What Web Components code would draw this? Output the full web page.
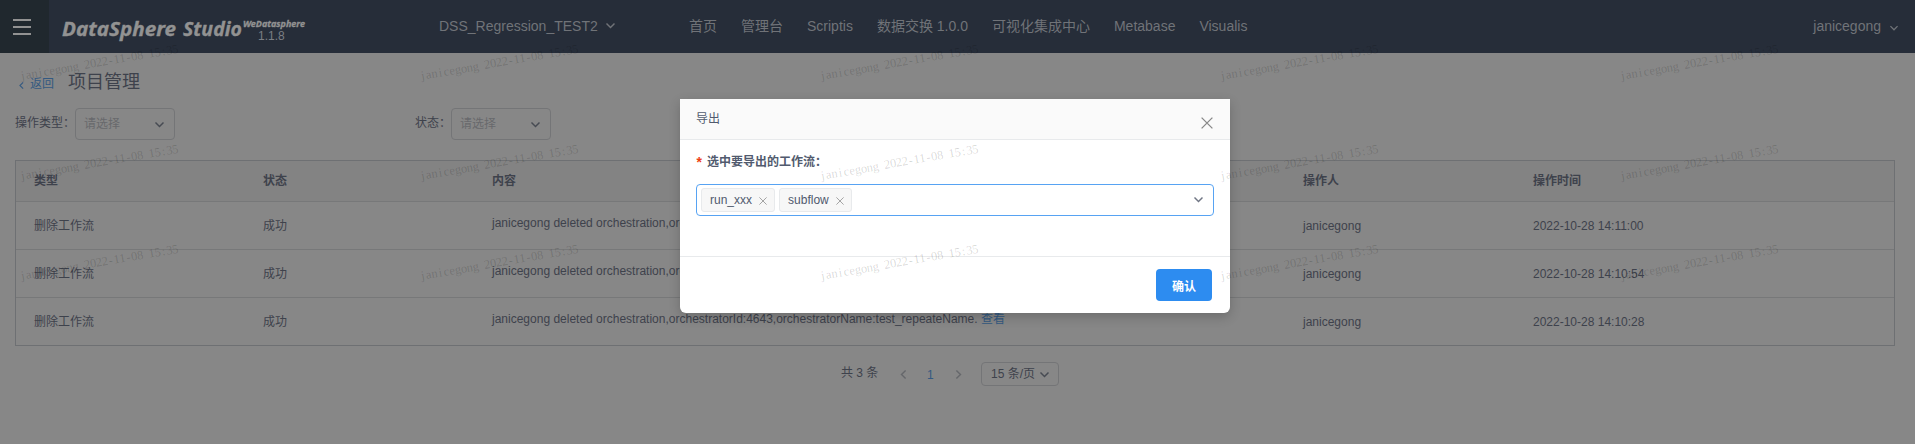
<!DOCTYPE html>
<html lang="zh">
<head>
<meta charset="utf-8">
<title>DataSphere Studio</title>
<style>
body{margin:0;background:#878787;font:12px/1.5 "Liberation Sans","Noto Sans CJK SC",sans-serif;color:#3e424c;overflow:hidden}
</style>
</head>
<body>
<dss-page></dss-page>
<script>
const define = (name, html, setup) => customElements.define(name, class extends HTMLElement {
  connectedCallback() {
    if (this.shadowRoot) return;
    const root = this.attachShadow({ mode: 'open' });
    root.innerHTML = html;
    if (setup) setup(this, root);
  }
});

define('ui-chevron', `<style>:host{display:inline-flex;width:9px;height:9px}svg{width:100%;height:100%;overflow:visible}
:host([dir=left]) svg{transform:rotate(90deg)}:host([dir=right]) svg{transform:rotate(-90deg)}</style>
<svg viewBox="0 0 9 9"><path d="M.5 2.4 4.5 6.5 8.5 2.4" fill="none" stroke="currentColor" stroke-width="1.4"/></svg>`);

define('ui-cross', `<style>:host{display:inline-flex;width:8px;height:8px}svg{width:100%;height:100%;overflow:visible}</style>
<svg viewBox="0 0 10 10"><path d="M.5.5 9.5 9.5M9.5.5.5 9.5" fill="none" stroke="currentColor" stroke-width="1.1"/></svg>`);

define('ui-select', `<style>:host{display:flex;box-sizing:border-box;width:100px;height:32px;align-items:center;justify-content:space-between;padding:0 10px 0 8px;border:1px solid #747577;border-radius:4px;color:#68696c}
ui-chevron{color:#474b53}</style><slot></slot><ui-chevron></ui-chevron>`);

define('dss-logo', `<style>:host{display:grid;grid-template-columns:181px 64px;height:53px;color:#8d8e90}
svg{display:block;overflow:visible}text{fill:#929292;font-family:"Noto Sans","Open Sans",sans-serif;font-weight:700;font-style:italic;stroke:#929292;stroke-width:.35px}
.side{display:flex;flex-direction:column;padding-top:18px}.v{font-size:12px;line-height:14px;padding:0 0 0 15px;margin-top:-1px;color:#7b7e84}</style>
<svg width="181" height="53"><text x="0" y="35.5" font-size="20" textLength="114" lengthAdjust="spacingAndGlyphs">DataSphere</text><text x="121" y="35.5" font-size="20" textLength="59" lengthAdjust="spacingAndGlyphs">Studio</text></svg>
<div class="side"><svg width="64" height="12"><text x="0" y="8.5" font-size="9.5" textLength="62" lengthAdjust="spacingAndGlyphs">WeDatasphere</text></svg><span class="v">1.1.8</span></div>`);

define('dss-header', `<style>:host{display:flex;height:53px;background:#262d39;color:#707378;font-size:14px;line-height:53px}
.menu{width:49px;display:flex;align-items:center;justify-content:center;padding-right:5px;box-sizing:border-box;background:#20282e}
dss-logo{margin-left:13px}
.project{display:flex;width:250px;margin-left:132px;align-items:center;gap:8px}
.project ui-chevron{width:9px;height:9px;margin-top:-2px}
nav{display:flex;gap:24px;flex:1}
.user{display:flex;align-items:center;gap:9px;padding-right:17px}.user ui-chevron{width:8px;height:8px;color:#707378;margin-top:3px}</style>
<div class="menu"><svg width="18" height="16" stroke="#929292" stroke-width="1.8"><path d="M0 1H18M0 8H18M0 15H18"/></svg></div>
<dss-logo></dss-logo>
<div class="project"><span>DSS_Regression_TEST2</span><ui-chevron></ui-chevron></div>
<nav><span>首页</span><span>管理台</span><span>Scriptis</span><span>数据交换 1.0.0</span><span>可视化集成中心</span><span>Metabase</span><span>Visualis</span></nav>
<div class="user"><span>janicegong</span><ui-chevron></ui-chevron></div>`);

define('dss-title', `<style>:host{display:flex;align-items:center;height:36px;margin-top:11px}
a{display:flex;align-items:center;gap:6px;color:#335981;margin:4px 14px 0 3px}ui-chevron{width:7px;height:7px;margin:2px -1px 0 0}
h1{margin:0;font-weight:400;font-size:18px;line-height:27px}</style>
<a><ui-chevron dir="left"></ui-chevron><span>返回</span></a><h1><slot></slot></h1>`);

define('dss-filters', `<style>:host{display:flex;height:32px;align-items:center;margin-top:8px}.f{display:flex;align-items:center;width:400px}.f>span{margin-top:-3px}</style>
<div class="f"><span>操作类型：</span><ui-select>请选择</ui-select></div><div class="f"><span>状态：</span><ui-select>请选择</ui-select></div>`);

define('dss-row', `<style>:host{display:grid;grid-template-columns:229px 229px 811px 230px 1fr;height:47px;align-items:center;border-bottom:1px solid #777879}
:host([head]){height:40px;background:#838383;font-weight:700}
:host(:last-child){border-bottom:0}
span{padding-left:18px;white-space:nowrap}:host(:not([head])) .c{margin-top:-6px}a{color:#335981}</style>
<span class="a"></span><span class="b"></span><span class="c"></span><span class="d"></span><span class="e"></span>`, (el, root) => {
  el.getAttribute('cells').split('|').forEach((t, i) => root.querySelectorAll('span')[i].textContent = t);
  if (el.hasAttribute('link')) {
    const a = document.createElement('a');
    a.textContent = el.getAttribute('link');
    root.querySelector('.c').append(' ', a);
  }
});

const content = 'janicegong deleted orchestration,orchestratorId:4643,orchestratorName:test_repeateName.';
define('dss-table', `<style>:host{display:block;border:1px solid #6e7073;margin-top:20px}</style>
<dss-row head cells="类型|状态|内容|操作人|操作时间"></dss-row>
<dss-row link="查看" cells="删除工作流|成功|${content}|janicegong|2022-10-28 14:11:00"></dss-row>
<dss-row link="查看" cells="删除工作流|成功|${content}|janicegong|2022-10-28 14:10:54"></dss-row>
<dss-row link="查看" cells="删除工作流|成功|${content}|janicegong|2022-10-28 14:10:28"></dss-row>`);

define('dss-pager', `<style>:host{display:flex;align-items:center;height:24px;margin:16px 0 0 826px}
ui-chevron{color:#65676b}.t{width:58px;margin-top:-2px}.n{color:#335981;width:7px;margin:2px 20px 0 19px}
ui-select{width:78px;height:24px;padding:0 9px;color:#3e424c;margin-left:18px}</style>
<span class="t">共 3 条</span><ui-chevron dir="left"></ui-chevron><span class="n">1</span><ui-chevron dir="right"></ui-chevron><ui-select>15 条/页</ui-select>`);

define('ui-tag', `<style>:host{display:flex;box-sizing:border-box;height:24px;align-items:center;padding:0 7px 0 8px;gap:7px;border:1px solid #e8eaec;border-radius:3px;background:#f7f7f7;color:#515a6e}ui-cross{color:#999;margin-top:1px}</style><slot></slot><ui-cross></ui-cross>`);

define('dss-modal', `<style>:host{position:absolute;left:680px;top:99px;width:550px;height:214px;background:#fff;border-radius:0 0 6px 6px;box-shadow:0 4px 12px rgba(0,0,0,.2);color:#515a6e;display:flex;flex-direction:column}
header{box-sizing:border-box;height:41px;background:#fafafa;border-bottom:1px solid #e8eaec;display:flex;justify-content:space-between;align-items:center;padding:0 17px 0 16px}
header ui-cross{width:12px;height:12px;color:#888;margin-top:8px}
main{box-sizing:border-box;height:116px;padding:13px 16px}
label{display:flex;gap:5px;font-weight:700;line-height:18px}i{font:700 14px/23px "Liberation Mono",monospace;width:6px;margin-left:-1px;padding-right:1px;color:#ed4014;height:18px}
.box{box-sizing:border-box;height:32px;margin-top:13px;border:1px solid #57a3f3;border-radius:4px;display:flex;align-items:center;gap:4px;padding:0 10px 0 4px}
.box>ui-chevron{margin-left:auto;color:#707684;margin-top:-1px}
footer{border-top:1px solid #e8eaec;display:flex;justify-content:flex-end;padding:12px 18px}
button{width:56px;height:32px;border:0;border-radius:4px;background:#2d8cf0;color:#fff;font:700 12px "Liberation Sans","Noto Sans CJK SC",sans-serif;padding:0}</style>
<header><span>导出</span><ui-cross></ui-cross></header>
<main><label><i>*</i><span>选中要导出的工作流：</span></label>
<div class="box"><ui-tag>run_xxx</ui-tag><ui-tag>subflow</ui-tag><ui-chevron></ui-chevron></div></main>
<footer><button>确认</button></footer>`);

define('dss-watermark', `<style>:host{position:absolute;inset:0;pointer-events:none}svg{display:block}text{font:12.5px "Liberation Serif",serif;fill:#000;fill-opacity:.16;text-anchor:middle}</style><svg width="1915" height="444"></svg>`, (el, root) => {
  const label = 'janicegong 2022-11-08 15:35';
  const xs = [...label].map((c, i) => 3 + i * 5.95).join(' ');
  let out = '';
  for (let r = 0; r < 3; r++) for (let c = 0; c < 5; c++)
    out += `<text x="${xs}" transform="translate(${20.5 + 400 * c} ${80 + 100 * r}) rotate(-9.8)">${label}</text>`;
  root.querySelector('svg').innerHTML = out;
});

define('dss-page', `<style>:host{display:block;position:relative;width:1915px;height:444px;overflow:hidden}.body{padding:0 20px 0 15px}</style>
<dss-header></dss-header>
<div class="body"><dss-title>项目管理</dss-title><dss-filters></dss-filters><dss-table></dss-table><dss-pager></dss-pager></div>
<dss-modal></dss-modal><dss-watermark></dss-watermark>`);
</script>
</body>
</html>
